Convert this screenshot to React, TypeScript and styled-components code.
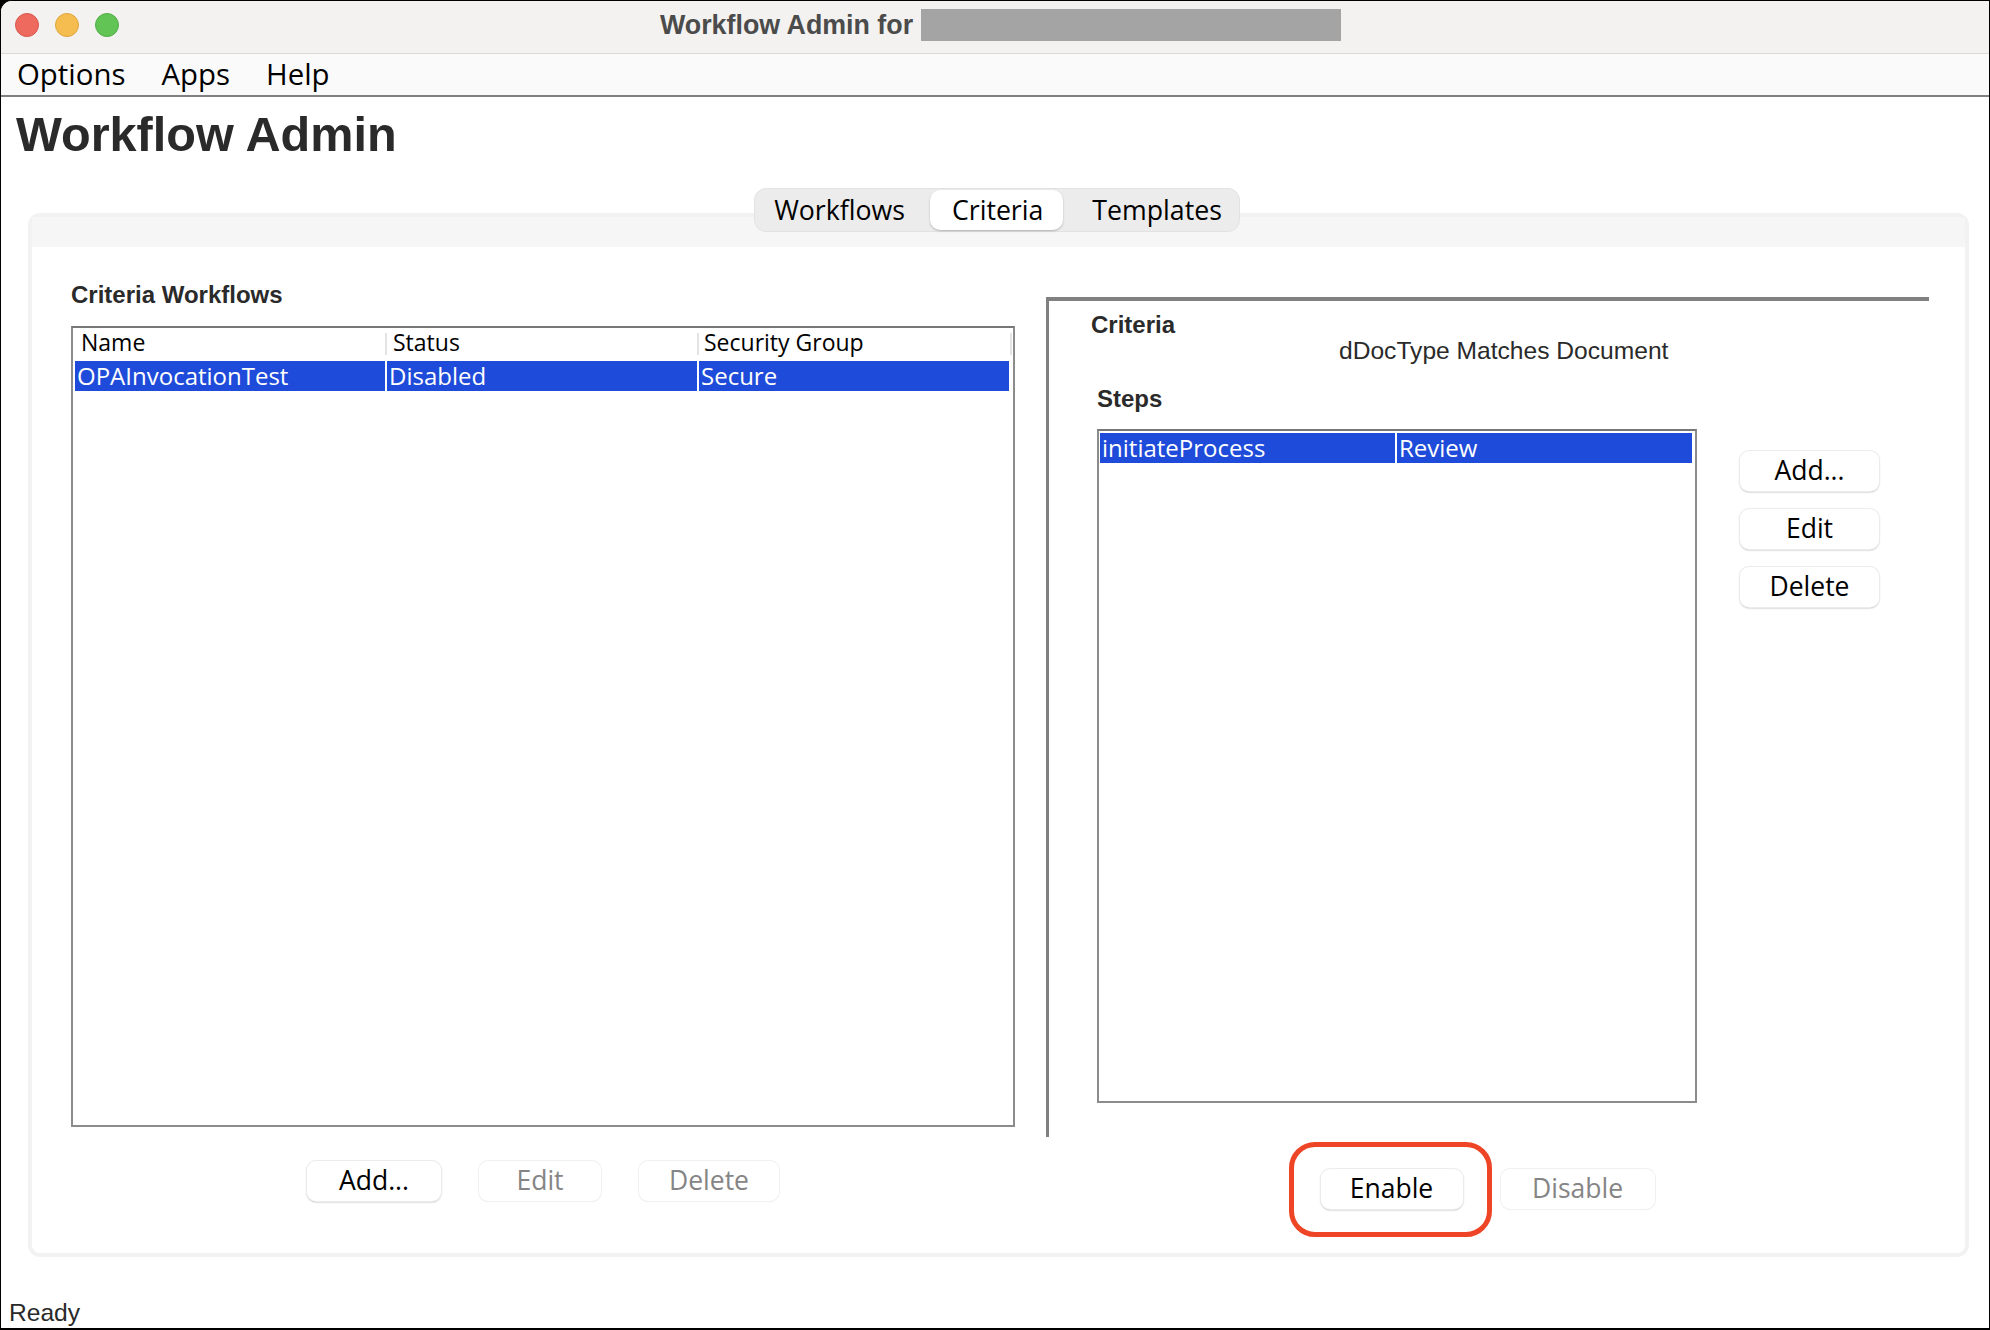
import React from "react";
import styled, { createGlobalStyle } from "styled-components";

const GlobalStyle = createGlobalStyle`
  html, body {
    margin: 0;
    padding: 0;
    background: #000;
  }
  * {
    box-sizing: border-box;
  }
`;

const uiFont = `"Open Sans", "Noto Sans", sans-serif`;
const labelFont = `"Liberation Sans", Arial, sans-serif`;

const Window = styled.div`
  width: 1990px;
  height: 1330px;
  display: flex;
  flex-direction: column;
  overflow: hidden;
  background: #fff;
  border: solid #000;
  border-width: 1px 1px 2px 1px;
  border-radius: 12px 0 0 0;
  font-family: ${uiFont};
  color: #000;
`;

const TitleBar = styled.div`
  height: 53px;
  flex: none;
  display: flex;
  align-items: center;
  padding: 0 0 4px 14px;
  background: #f3f2f0;
  border-bottom: 1px solid #d9d9d9;
`;

const Lights = styled.div`
  display: flex;
  gap: 16px;
  margin-right: 541px;
`;

const Light = styled.span<{ $fill: string; $edge: string }>`
  width: 24px;
  height: 24px;
  border-radius: 50%;
  background: ${(p) => p.$fill};
  border: 1px solid ${(p) => p.$edge};
`;

const WindowTitle = styled.div`
  font: bold 26.8px ${labelFont};
  color: #4b4b4b;
`;

const Redacted = styled.div`
  width: 420px;
  height: 32px;
  margin-left: 8px;
  background: #a4a4a4;
`;

const MenuBar = styled.div`
  height: 43px;
  flex: none;
  display: flex;
  align-items: center;
  gap: 36px;
  padding: 0 0 2px 16px;
  background: #fafafa;
  border-bottom: 2px solid #808080;
  font-size: 29.4px;
`;

const Main = styled.div`
  flex: 1;
  display: flex;
  flex-direction: column;
  padding: 0 20px 0 27px;
`;

const Heading = styled.h1`
  height: 91px;
  margin: 0 0 0 -12px;
  padding-top: 10px;
  font: bold 48.6px/54px ${labelFont};
  color: #2a2a2a;
`;

const TabStrip = styled.div`
  align-self: center;
  display: flex;
  height: 44px;
  margin: 0 3px -19px 0;
  padding: 1px;
  position: relative;
  z-index: 1;
  background: #ececec;
  border: 1px solid #e2e2e2;
  border-radius: 12px;
`;

const Tab = styled.div<{ $active?: boolean; $left: number; $right: number }>`
  display: flex;
  align-items: center;
  padding: 0 ${(p) => p.$right}px 2px ${(p) => p.$left}px;
  font-size: 26.7px;
  border-radius: 10px;
  background: ${(p) => (p.$active ? "#fff" : "transparent")};
  box-shadow: ${(p) => (p.$active ? "0 1px 2px rgba(0,0,0,0.25)" : "none")};
`;

const Panel = styled.div`
  height: 1044px;
  flex: none;
  display: flex;
  flex-direction: column;
  border: 4px solid #f2f2f2;
  border-radius: 12px;
`;

const PanelHead = styled.div`
  height: 30px;
  flex: none;
  background: #f6f6f6;
`;

const PanelBody = styled.div`
  display: grid;
  grid-template-columns: 944px 883px;
  gap: 31px;
  padding: 0 36px 0 39px;
`;

const Column = styled.div`
  display: flex;
  flex-direction: column;
`;

const SectionLabel = styled.div`
  font: bold 24px/28px ${labelFont};
  color: #2a2a2a;
`;

const WorkflowsLabel = styled(SectionLabel)`
  margin-top: 34px;
`;

const TableBox = styled.div<{ $width: number; $height: number; $pad: string; $top?: number }>`
  width: ${(p) => p.$width}px;
  height: ${(p) => p.$height}px;
  margin-top: ${(p) => p.$top ?? 0}px;
  padding: ${(p) => p.$pad};
  border: 2px solid #8c8c8c;
  border-top-color: #777;
`;

const HeaderRow = styled.div`
  display: grid;
  grid-template-columns: 312px 312px 1fr;
  height: 22px;
  margin-bottom: 6px;
`;

const HeaderCell = styled.div<{ $indent: number }>`
  padding-left: ${(p) => p.$indent}px;
  border-right: 2px solid #e4e4e4;
  font-size: 23px;
  line-height: 19px;
`;

const Row = styled.div<{ $cols: string; $width: number }>`
  display: grid;
  grid-template-columns: ${(p) => p.$cols};
  width: ${(p) => p.$width}px;
  height: 30px;
`;

const Cell = styled.div`
  padding-left: 2px;
  background: #1e4bd9;
  border-right: 2px solid #fff;
  color: #fff;
  font-size: 24px;
  line-height: 30px;
  white-space: nowrap;

  &:last-child {
    border-right: 0;
  }
`;

const ButtonRow = styled.div<{ $top: number }>`
  display: flex;
  justify-content: center;
  gap: 38px;
  margin-top: ${(p) => p.$top}px;
`;

const Button = styled.div<{ $width: number; $off?: boolean }>`
  position: relative;
  width: ${(p) => p.$width}px;
  height: 40px;
  display: flex;
  align-items: center;
  justify-content: center;
  padding-bottom: 3px;
  background: #fff;
  border-radius: 9px;
  font-size: 26.5px;
  color: ${(p) => (p.$off ? "#858585" : "#000")};
  box-shadow: ${(p) =>
    p.$off
      ? "0 0 0 1px #f0f0f0, 0 1px 1px rgba(0,0,0,0.08)"
      : "0 0 0 1px #ececec, 0 1px 2px rgba(0,0,0,0.4)"};
`;

const Highlight = styled.span`
  position: absolute;
  left: -32px;
  top: -27px;
  width: 203px;
  height: 95px;
  border: 5px solid #ee4527;
  border-radius: 26px;
`;

const CriteriaPane = styled.div`
  margin-top: 50px;
  height: 840px;
  padding: 10px 0 0 42px;
  border-top: 4px solid #808080;
  border-left: 3px solid #808080;
`;

const CriteriaValue = styled.div`
  margin: -2px 0 0 248px;
  font: 24.6px/28px ${labelFont};
  color: #2a2a2a;
`;

const StepsLabel = styled(SectionLabel)`
  margin: 20px 0 0 6px;
`;

const StepsLayout = styled.div`
  display: flex;
  gap: 43px;
  margin: 16px 0 0 6px;
`;

const SideButtons = styled.div`
  display: flex;
  flex-direction: column;
  gap: 18px;
  padding-top: 22px;
`;

const StatusBar = styled.div`
  margin: auto 0 0 -27px;
  padding: 0 0 1px 8px;
  font: 24.6px/28px ${labelFont};
  color: #2a2a2a;
`;

export default function App() {
  return (
    <Window>
      <GlobalStyle />
      <TitleBar>
        <Lights>
          <Light $fill="#ee6a5f" $edge="#d9564c" />
          <Light $fill="#f5bd4f" $edge="#dfa63c" />
          <Light $fill="#61c454" $edge="#52ad46" />
        </Lights>
        <WindowTitle>Workflow Admin for</WindowTitle>
        <Redacted />
      </TitleBar>
      <MenuBar>
        <span>Options</span>
        <span>Apps</span>
        <span>Help</span>
      </MenuBar>
      <Main>
        <Heading>Workflow Admin</Heading>
        <TabStrip>
          <Tab $left={18} $right={25}>Workflows</Tab>
          <Tab $active $left={22} $right={20}>Criteria</Tab>
          <Tab $left={29} $right={16}>Templates</Tab>
        </TabStrip>
        <Panel>
          <PanelHead />
          <PanelBody>
            <Column>
              <WorkflowsLabel>Criteria Workflows</WorkflowsLabel>
              <TableBox $width={944} $height={801} $pad="5px 1px 0 2px" $top={17}>
                <HeaderRow>
                  <HeaderCell $indent={6}>Name</HeaderCell>
                  <HeaderCell $indent={6}>Status</HeaderCell>
                  <HeaderCell $indent={5}>Security Group</HeaderCell>
                </HeaderRow>
                <Row $cols="312px 312px 1fr" $width={934}>
                  <Cell>OPAInvocationTest</Cell>
                  <Cell>Disabled</Cell>
                  <Cell>Secure</Cell>
                </Row>
              </TableBox>
              <ButtonRow $top={34}>
                <Button $width={134}>Add...</Button>
                <Button $width={122} $off>Edit</Button>
                <Button $width={140} $off>Delete</Button>
              </ButtonRow>
            </Column>
            <Column>
              <CriteriaPane>
                <SectionLabel>Criteria</SectionLabel>
                <CriteriaValue>dDocType Matches Document</CriteriaValue>
                <StepsLabel>Steps</StepsLabel>
                <StepsLayout>
                  <TableBox $width={600} $height={674} $pad="2px 3px 0 1px">
                    <Row $cols="297px 1fr" $width={592}>
                      <Cell>initiateProcess</Cell>
                      <Cell>Review</Cell>
                    </Row>
                  </TableBox>
                  <SideButtons>
                    <Button $width={139}>Add...</Button>
                    <Button $width={139}>Edit</Button>
                    <Button $width={139}>Delete</Button>
                  </SideButtons>
                </StepsLayout>
              </CriteriaPane>
              <ButtonRow $top={32}>
                <Button $width={142}>
                  Enable
                  <Highlight />
                </Button>
                <Button $width={154} $off>Disable</Button>
              </ButtonRow>
            </Column>
          </PanelBody>
        </Panel>
        <StatusBar>Ready</StatusBar>
      </Main>
    </Window>
  );
}
